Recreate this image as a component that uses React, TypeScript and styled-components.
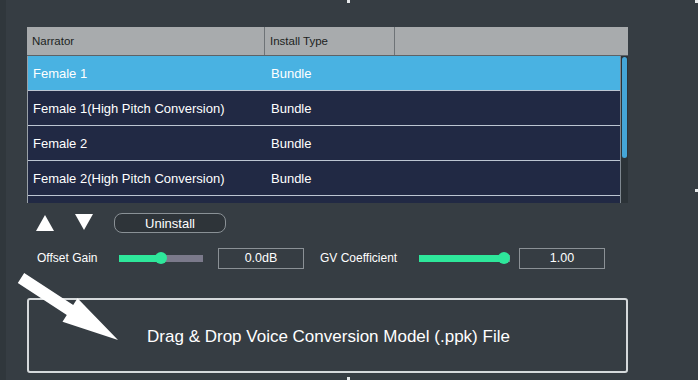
import styled, {createGlobalStyle} from "styled-components";

const GlobalStyle = createGlobalStyle`
  html, body {
    margin: 0;
    padding: 0;
    background: #363d43;
  }
  body {
    font-family: "Liberation Sans", Arial, sans-serif;
    color: #ffffff;
  }
`

const Page = styled.div`
  position: relative;
  width: 698px;
  height: 380px;
  box-sizing: border-box;
  padding: 27px 70px 0 21px;
  background: #363d43;
  border-left: 6px solid #30373c;
  overflow: hidden;
  display: flex;
  flex-direction: column;
`
const Table = styled.div`
  width: 601px;
  display: flex;
  flex-direction: column;
`
const HeaderRow = styled.div`
  height: 28px;
  display: flex;
  background: #a8abad;
  border-bottom: 1px solid #5d6266;
`
const HeaderCell = styled.div<{ $w: number }>`
  width: ${p => p.$w}px;
  box-sizing: border-box;
  padding-left: 5px;
  display: flex;
  align-items: center;
  font-size: 11.5px;
  color: #1c1f22;
  border-right: 1px solid #6e7377;
  &:last-child {
    border-right: none;
    flex: 1;
  }
`
const Body = styled.div`
  height: 147px;
  display: flex;
  overflow: hidden;
  border-left: 1px solid #9aa1a8;
`
const Rows = styled.div`
  flex: 1;
  display: flex;
  flex-direction: column;
`
const Row = styled.div<{ $selected?: boolean }>`
  height: 34px;
  flex-shrink: 0;
  display: flex;
  align-items: center;
  background: ${p => (p.$selected ? "#49b2e2" : "#212944")};
  border-bottom: 1px solid #bcc5d2;
  font-size: 13px;
  color: #ffffff;
`
const Cell = styled.div<{ $w: number }>`
  width: ${p => p.$w}px;
  padding: 1px 0 0 5px;
  box-sizing: border-box;
`
const Scrollbar = styled.div`
  width: 8px;
  background: #2c3338;
  padding: 1px 1px;
  box-sizing: border-box;
  border-left: 1px solid #7f8890;
`
const Thumb = styled.div`
  height: 101px;
  border-radius: 3px;
  background: #45a6d8;
`
const Controls = styled.div`
  display: flex;
  align-items: center;
  margin-top: 9px;
  height: 22px;
  padding-left: 9px;
`
const Triangle = styled.div<{ $down?: boolean }>`
  width: 0;
  height: 0;
  border-left: 9px solid transparent;
  border-right: 9px solid transparent;
  ${p => (p.$down
    ? "border-top: 16px solid #ffffff; margin-top: -2px;"
    : "border-bottom: 16px solid #ffffff;")}
  margin-right: 21px;
`
const Button = styled.button`
  width: 112px;
  height: 20px;
  border: 1px solid #8a9196;
  border-radius: 8px;
  background: #2e3439;
  color: #ffffff;
  font-family: "Liberation Sans", Arial, sans-serif;
  font-size: 13px;
  padding: 0;
`
const GainRow = styled.div`
  display: flex;
  align-items: center;
  margin-top: 13px;
  height: 22px;
  padding-left: 10px;
  font-size: 12px;
`
const Label = styled.span<{ $w: number; $ml?: number }>`
  width: ${p => p.$w}px;
  margin-left: ${p => p.$ml ?? 0}px;
`
const Slider = styled.div<{ $w: number }>`
  position: relative;
  width: ${p => p.$w}px;
  height: 7px;
  background: #7b7a8b;
`
const Fill = styled.div`
  height: 100%;
  background: #2ee79b;
`
const Knob = styled.div`
  position: absolute;
  top: 50%;
  width: 12px;
  height: 12px;
  margin: -6px 0 0 -6px;
  border-radius: 50%;
  background: #2ee79b;
`
const ValueBox = styled.div<{ $ml: number }>`
  width: 86px;
  height: 21px;
  margin-left: ${p => p.$ml}px;
  box-sizing: border-box;
  border: 1px solid #8b9196;
  display: flex;
  align-items: center;
  justify-content: center;
  font-size: 12.5px;
`
const DropZone = styled.div`
  margin-top: 29px;
  width: 601px;
  height: 75px;
  box-sizing: border-box;
  border: 2px solid #d5d9db;
  border-radius: 3px;
  display: flex;
  align-items: center;
  justify-content: center;
  font-size: 17px;
  padding: 2px 0 0 2px;
`
const Arrow = styled.svg`
  position: absolute;
  left: -6px;
  top: 0;
  pointer-events: none;
`
const Handle = styled.div<{ $x: number; $y: number }>`
  position: absolute;
  left: ${p => p.$x}px;
  top: ${p => p.$y}px;
  width: 3px;
  height: 3px;
  background: #e6e9eb;
`

const narrators = [
    {name: "Female 1", type: "Bundle"},
    {name: "Female 1(High Pitch Conversion)", type: "Bundle"},
    {name: "Female 2", type: "Bundle"},
    {name: "Female 2(High Pitch Conversion)", type: "Bundle"},
]

function GainSlider({width, value}: { width: number; value: number }) {
    return (
        <Slider $w={width}>
            <Fill style={{width: `${value * 100}%`}}/>
            <Knob style={{left: `${value * 100}%`}}/>
        </Slider>
    )
}

export default function App() {
    return (
        <>
            <GlobalStyle/>
            <Page>
                <Table>
                    <HeaderRow>
                        <HeaderCell $w={238}>Narrator</HeaderCell>
                        <HeaderCell $w={130}>Install Type</HeaderCell>
                        <HeaderCell $w={233}/>
                    </HeaderRow>
                    <Body>
                        <Rows>
                            {narrators.map((n, i) => (
                                <Row key={n.name} $selected={i === 0}>
                                    <Cell $w={238}>{n.name}</Cell>
                                    <Cell $w={130}>{n.type}</Cell>
                                </Row>
                            ))}
                            <Row/>
                        </Rows>
                        <Scrollbar>
                            <Thumb/>
                        </Scrollbar>
                    </Body>
                </Table>
                <Controls>
                    <Triangle/>
                    <Triangle $down/>
                    <Button>Uninstall</Button>
                </Controls>
                <GainRow>
                    <Label $w={82}>Offset Gain</Label>
                    <GainSlider width={84} value={0.5}/>
                    <ValueBox $ml={15}>0.0dB</ValueBox>
                    <Label $w={99} $ml={16}>GV Coefficient</Label>
                    <GainSlider width={91} value={0.93}/>
                    <ValueBox $ml={9}>1.00</ValueBox>
                </GainRow>
                <DropZone>Drag &amp; Drop Voice Conversion Model (.ppk) File</DropZone>
                <Arrow width="698" height="380" viewBox="0 0 698 380">
                    <polygon
                        points="24.2,272.9 73.2,304.9 77.5,298.2 118,340 62.5,321.8 66.8,315.1 17.8,283.1"
                        fill="#ffffff"
                    />
                </Arrow>
                <Handle $x={341} $y={0}/>
                <Handle $x={689} $y={0}/>
                <Handle $x={689} $y={189}/>
                <Handle $x={341} $y={377}/>
            </Page>
        </>
    )
}
